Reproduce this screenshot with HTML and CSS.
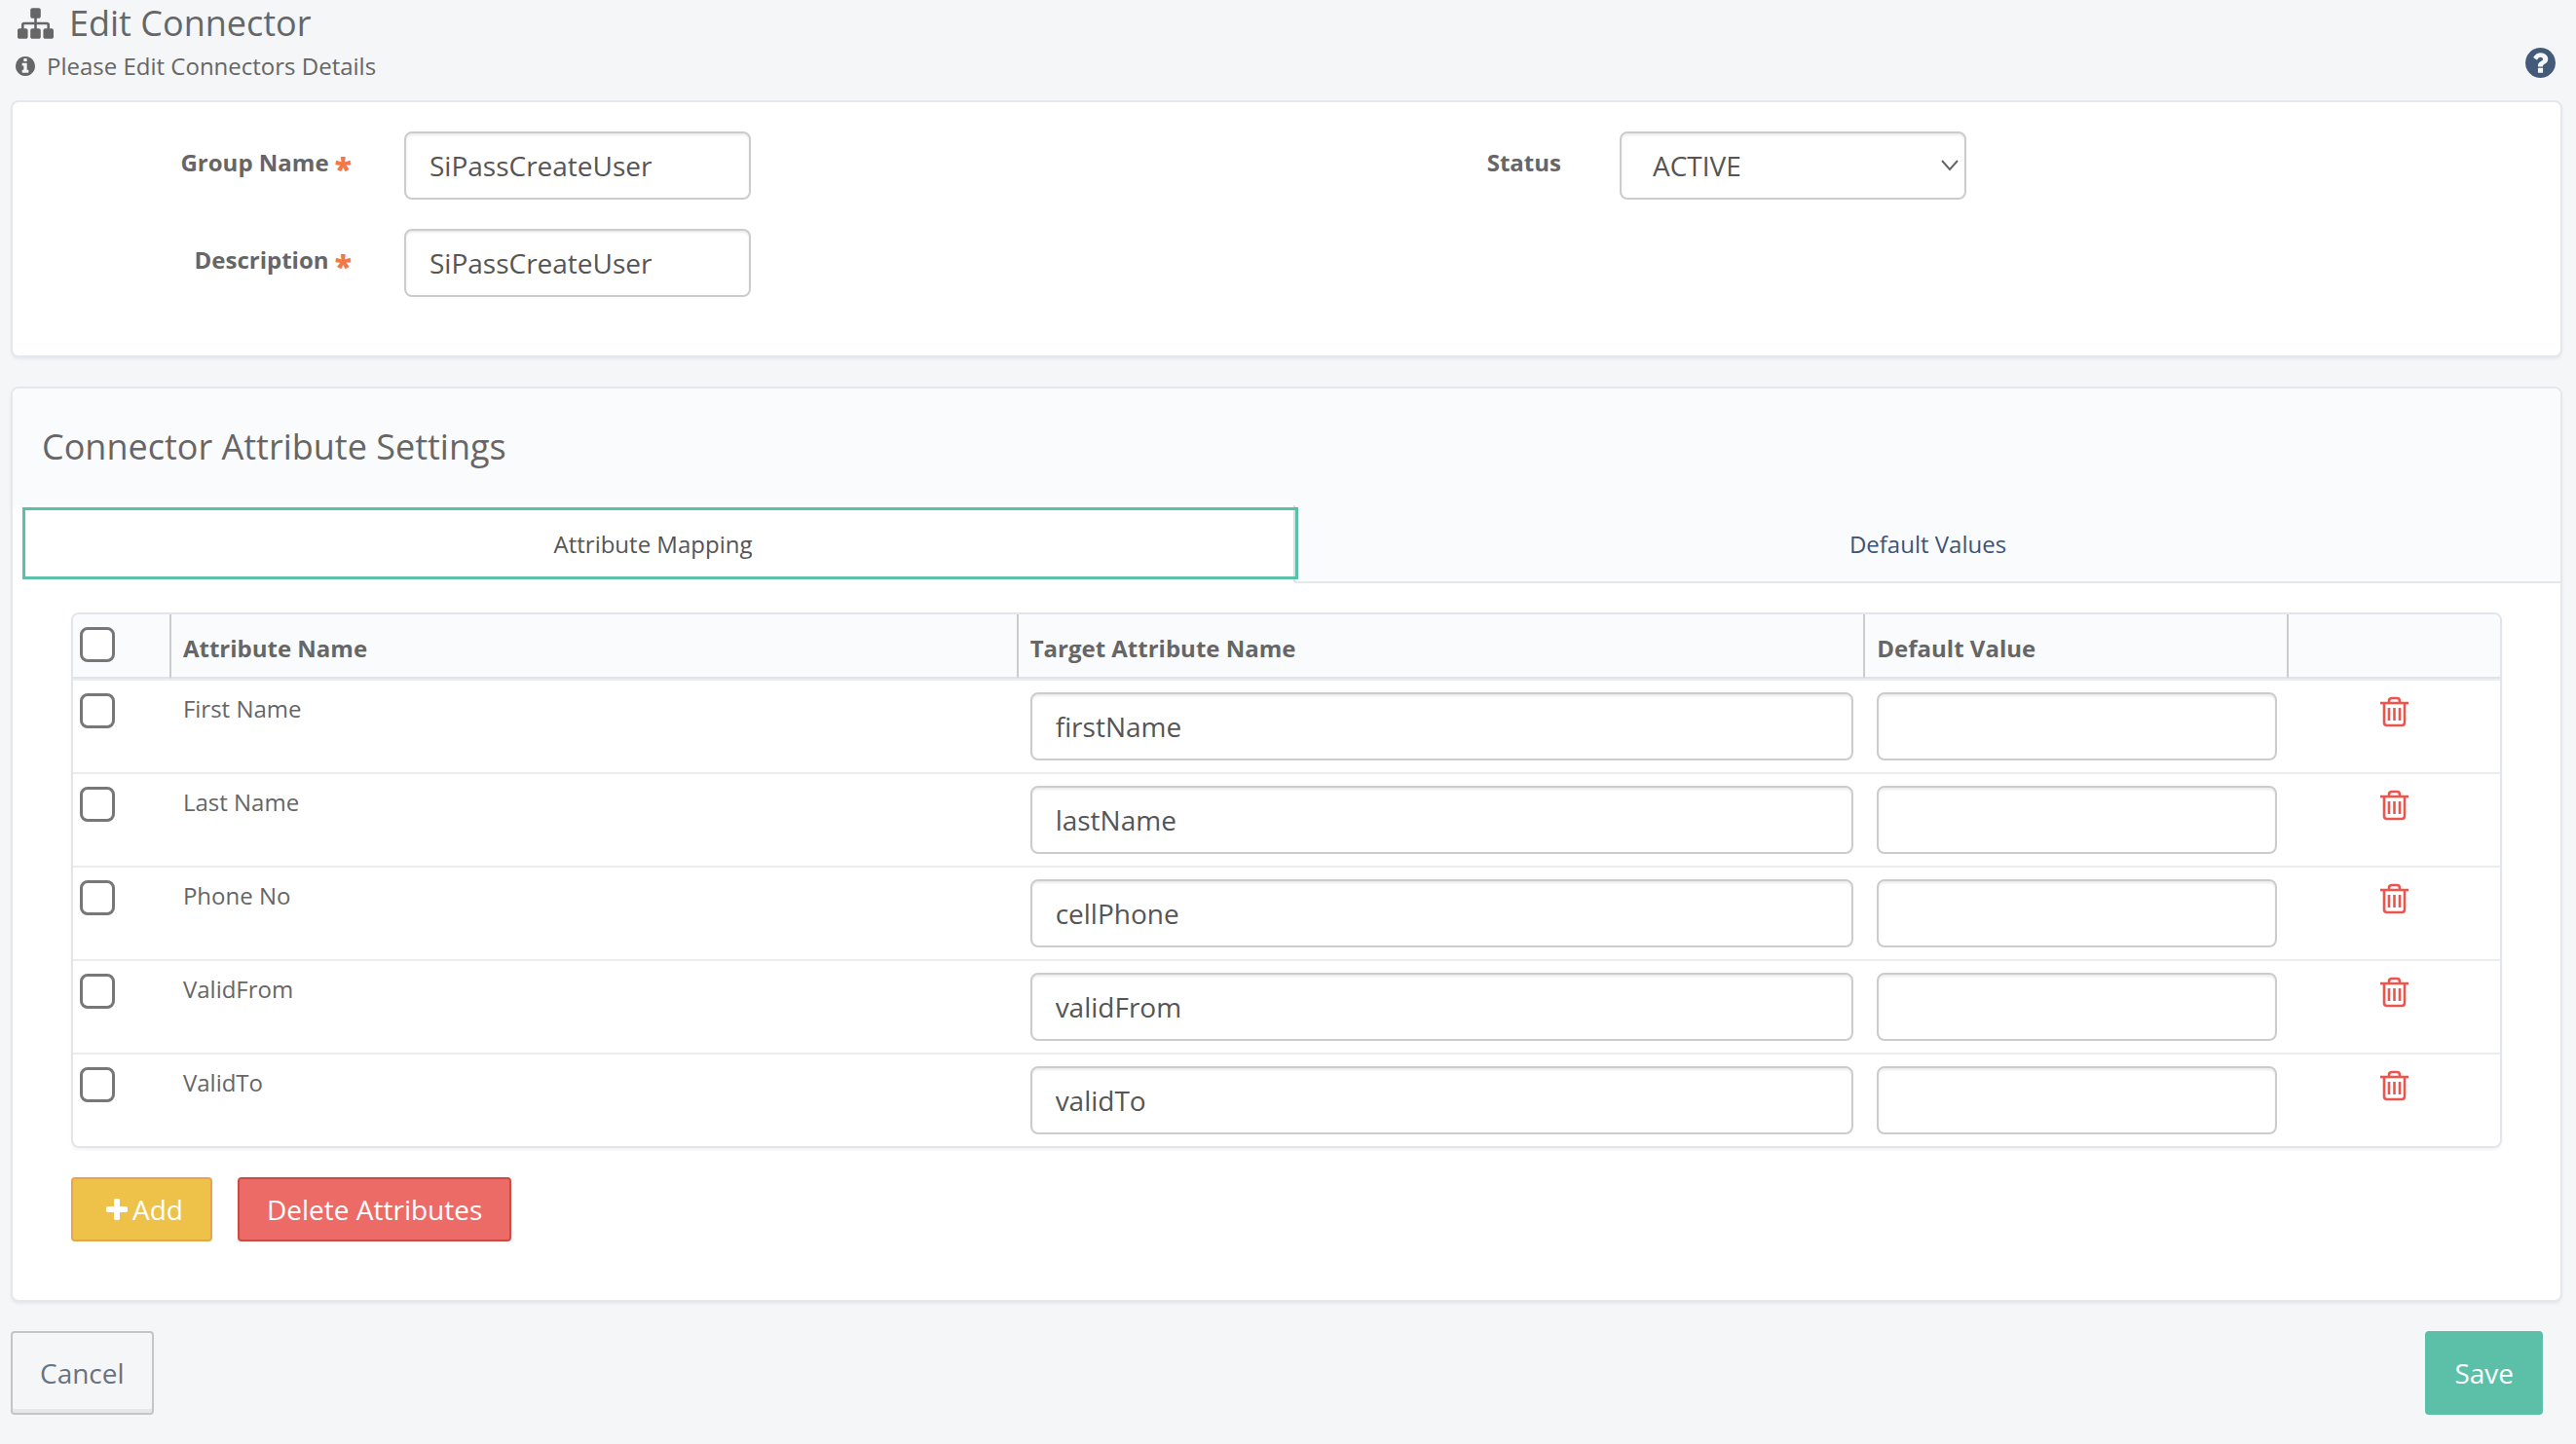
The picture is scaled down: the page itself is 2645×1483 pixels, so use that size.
FILE: index.html
```html
<!DOCTYPE html>
<html lang="en">
<head>
  <meta charset="UTF-8" />
  <meta name="viewport" content="width=device-width, initial-scale=1.0" />
  <title>Edit Connector</title>
  <link rel="stylesheet" href="styles.css">
</head>
<body>

  <!-- Shared icons -->
  <svg class="sprite" aria-hidden="true">
    <symbol id="icon-trash" viewBox="0 0 29 32">
      <path d="M0 7h29M9 7V5q0-3 3-3h5q3 0 3 3v2M4 7v20q0 3 3 3h15q3 0 3-3V7M9 12v13M14.500 12v13M20 12v13" fill="none" stroke="currentColor" stroke-width="2.600"/>
    </symbol>
  </svg>

  <!-- Page title -->
  <header class="page-header">
    <div>
      <h1>
        <svg class="icon-sitemap" viewBox="0 128 1792 1536" aria-hidden="true"><path fill="currentColor" d="M1792 1248v320q0 40-28 68t-68 28h-320q-40 0-68-28t-28-68v-320q0-40 28-68t68-28h96v-192h-512v192h96q40 0 68 28t28 68v320q0 40-28 68t-68 28h-320q-40 0-68-28t-28-68v-320q0-40 28-68t68-28h96v-192h-512v192h96q40 0 68 28t28 68v320q0 40-28 68t-68 28h-320q-40 0-68-28t-28-68v-320q0-40 28-68t68-28h96v-192q0-52 38-90t90-38h512v-192h-96q-40 0-68-28t-28-68v-320q0-40 28-68t68-28h320q40 0 68 28t28 68v320q0 40-28 68t-68 28h-96v192h512q52 0 90 38t38 90v192h96q40 0 68 28t28 68z"/></svg>
        Edit Connector
      </h1>
      <p class="subtitle">
        <svg class="icon-info" viewBox="128 128 1536 1536" aria-hidden="true"><path fill="currentColor" d="M1152 1376v-160q0-14-9-23t-23-9h-96v-512q0-14-9-23t-23-9h-320q-14 0-23 9t-9 23v160q0 14 9 23t23 9h96v320h-96q-14 0-23 9t-9 23v160q0 14 9 23t23 9h448q14 0 23-9t9-23zm-128-896v-160q0-14-9-23t-23-9h-192q-14 0-23 9t-9 23v160q0 14 9 23t23 9h192q14 0 23-9t9-23zm640 416q0 209-103 385.5t-279.5 279.5-385.5 103-385.5-103-279.5-279.5-103-385.5 103-385.5 279.5-279.5 385.5-103 385.5 103 279.5 279.5 103 385.5z"/></svg>
        Please Edit Connectors Details
      </p>
    </div>
    <a class="help" href="#" aria-label="Help">
      <svg viewBox="128 128 1536 1536" aria-hidden="true"><path fill="currentColor" d="M1024 1376v-192q0-14-9-23t-23-9h-192q-14 0-23 9t-9 23v192q0 14 9 23t23 9h192q14 0 23-9t9-23zm256-672q0-88-55.5-163t-138.5-116-170-41q-243 0-371 213-15 24 8 42l132 100q7 6 19 6 16 0 25-12 53-68 86-92 34-24 86-24 48 0 85.5 26t37.5 59q0 38-20 61t-68 45q-63 28-115.5 86.5t-52.5 125.5v36q0 14 9 23t23 9h192q14 0 23-9t9-23q0-19 21.5-49.5t54.5-49.5q32-18 49-28.5t46-35 44.5-48 28-60.5 12.5-81zm384 192q0 209-103 385.5t-279.5 279.5-385.5 103-385.5-103-279.5-279.5-103-385.5 103-385.5 279.5-279.5 385.5-103 385.5 103 279.5 279.5 103 385.5z"/></svg>
    </a>
  </header>

  <!-- Connector details -->
  <section class="panel details">
    <div class="field">
      <label for="groupName">Group Name <span class="required">*</span></label>
      <input class="form-control" type="text" id="groupName" value="SiPassCreateUser">
    </div>
    <div class="field optional">
      <label for="status">Status</label>
      <div class="select-wrap">
        <select class="form-control" id="status">
          <option>ACTIVE</option>
          <option>INACTIVE</option>
        </select>
        <svg class="chevron" viewBox="0 0 18 12" aria-hidden="true"><path d="M1 1l8 9 8-9" fill="none" stroke="currentColor" stroke-width="2"/></svg>
      </div>
    </div>
    <div class="field">
      <label for="description">Description <span class="required">*</span></label>
      <input class="form-control" type="text" id="description" value="SiPassCreateUser">
    </div>
  </section>

  <!-- Attribute settings -->
  <section class="panel">
    <div class="panel-heading">
      <h2>Connector Attribute Settings</h2>
      <ul class="tabs">
        <li class="active"><a href="#mapping">Attribute Mapping</a></li>
        <li><a href="#defaults">Default Values</a></li>
      </ul>
    </div>

    <div class="panel-body" id="mapping">
      <div class="table-box">
        <table>
          <colgroup>
            <col class="col-check">
            <col class="col-name">
            <col class="col-name">
            <col class="col-value">
            <col>
          </colgroup>
          <thead>
            <tr>
              <th class="check"><input type="checkbox" aria-label="Select all"></th>
              <th>Attribute Name</th>
              <th>Target Attribute Name</th>
              <th>Default Value</th>
              <th></th>
            </tr>
          </thead>
          <tbody>
            <tr>
              <td class="check"><input type="checkbox" aria-label="Select First Name"></td>
              <td>First Name</td>
              <td><input class="form-control" type="text" value="firstName" aria-label="Target for First Name"></td>
              <td><input class="form-control" type="text" aria-label="Default for First Name"></td>
              <td class="action"><button class="btn-trash" type="button" aria-label="Delete First Name"><svg><use href="#icon-trash"/></svg></button></td>
            </tr>
            <tr>
              <td class="check"><input type="checkbox" aria-label="Select Last Name"></td>
              <td>Last Name</td>
              <td><input class="form-control" type="text" value="lastName" aria-label="Target for Last Name"></td>
              <td><input class="form-control" type="text" aria-label="Default for Last Name"></td>
              <td class="action"><button class="btn-trash" type="button" aria-label="Delete Last Name"><svg><use href="#icon-trash"/></svg></button></td>
            </tr>
            <tr>
              <td class="check"><input type="checkbox" aria-label="Select Phone No"></td>
              <td>Phone No</td>
              <td><input class="form-control" type="text" value="cellPhone" aria-label="Target for Phone No"></td>
              <td><input class="form-control" type="text" aria-label="Default for Phone No"></td>
              <td class="action"><button class="btn-trash" type="button" aria-label="Delete Phone No"><svg><use href="#icon-trash"/></svg></button></td>
            </tr>
            <tr>
              <td class="check"><input type="checkbox" aria-label="Select ValidFrom"></td>
              <td>ValidFrom</td>
              <td><input class="form-control" type="text" value="validFrom" aria-label="Target for ValidFrom"></td>
              <td><input class="form-control" type="text" aria-label="Default for ValidFrom"></td>
              <td class="action"><button class="btn-trash" type="button" aria-label="Delete ValidFrom"><svg><use href="#icon-trash"/></svg></button></td>
            </tr>
            <tr>
              <td class="check"><input type="checkbox" aria-label="Select ValidTo"></td>
              <td>ValidTo</td>
              <td><input class="form-control" type="text" value="validTo" aria-label="Target for ValidTo"></td>
              <td><input class="form-control" type="text" aria-label="Default for ValidTo"></td>
              <td class="action"><button class="btn-trash" type="button" aria-label="Delete ValidTo"><svg><use href="#icon-trash"/></svg></button></td>
            </tr>
          </tbody>
        </table>
      </div>

      <div class="table-actions">
        <button class="btn btn-add" type="button">
          <svg viewBox="192 128 1408 1408" aria-hidden="true"><path fill="currentColor" d="M1600 736v192q0 40-28 68t-68 28h-416v416q0 40-28 68t-68 28h-192q-40 0-68-28t-28-68v-416h-416q-40 0-68-28t-28-68v-192q0-40 28-68t68-28h416v-416q0-40 28-68t68-28h192q40 0 68 28t28 68v416h416q40 0 68 28t28 68z"/></svg>
          Add
        </button>
        <button class="btn btn-delete" type="button">Delete Attributes</button>
      </div>
    </div>
  </section>

  <!-- Form buttons -->
  <footer class="page-actions">
    <button class="btn btn-cancel" type="button">Cancel</button>
    <button class="btn btn-save" type="submit">Save</button>
  </footer>

</body>
</html>
```

FILE: styles.css
```css
* {
  box-sizing: border-box;
}

body {
  margin: 0;
  padding: 0 14px 30px 11px;
  background-color: #f5f6f8;
  color: #666;
  font-family: "Open Sans", "Noto Sans", sans-serif;
  font-size: 24px;
  line-height: 34px;
}

h1,
h2 {
  margin: 0;
  font-size: 36px;
  font-weight: normal;
  line-height: 48px;
}

.sprite {
  display: none;
}

/* Page title */
.page-header {
  display: flex;
  justify-content: space-between;
  align-items: flex-end;
  margin-bottom: 18px;
  padding: 0 7px 0 5px;
}

.page-header h1,
.subtitle {
  display: flex;
  align-items: center;
}

.page-header h1 {
  gap: 16px;
  padding-left: 2px;
}

.subtitle {
  gap: 12px;
  margin: 3px 0 0;
}

.icon-sitemap {
  width: 37px;
  height: 32px;
}

.icon-info {
  width: 20px;
  height: 20px;
}

.help {
  color: #435a7a;
  margin-bottom: 5px;
}

.help svg {
  display: block;
  width: 31px;
  height: 31px;
}

/* Panels */
.panel {
  margin-bottom: 30px;
  background-color: #fff;
  border: 2px solid #e4e7ec;
  border-radius: 8px;
  box-shadow: 0 2px 3px rgba(0,0,0,0.06);
}

.details {
  display: grid;
  grid-template-columns: 1fr 1fr;
  row-gap: 30px;
  padding: 30px 120px 60px 0;
}

.field {
  display: flex;
  align-items: flex-start;
}

.field label {
  width: 348px;
  margin-right: 54px;
  padding-top: 15px;
  font-weight: bold;
  text-align: right;
}

.field.optional label {
  padding-right: 6px;
}

.field .form-control {
  width: 356px;
}

.required {
  color: #f4774a;
  font-size: 32px;
  font-weight: 800;
  line-height: 0;
  vertical-align: -9px;
}

.form-control {
  display: block;
  width: 100%;
  height: 70px;
  padding: 0 24px;
  background-color: #fff;
  border: 2px solid #ccc;
  border-radius: 8px;
  box-shadow: inset 0 2px 2px rgba(0,0,0,0.075);
  color: #555;
  font-family: inherit;
  font-size: 28px;
}

select.form-control {
  padding: 0 32px;
  appearance: none;
}

.select-wrap {
  position: relative;
}

.chevron {
  position: absolute;
  top: 29px;
  right: 8px;
  width: 18px;
  height: 12px;
  pointer-events: none;
}

/* Tabs */
.panel-heading {
  padding-top: 36px;
  background-color: #fafbfd;
  border-radius: 6px 6px 0 0;
}

.panel-heading h2 {
  margin: 0 30px 36px;
}

.tabs {
  display: grid;
  grid-template-columns: 1317fr 1299fr;
  margin: 0;
  padding: 0;
  list-style-type: none;
}

.tabs li {
  border-bottom: 2px solid #e4e7ec;
}

.tabs li.active {
  background-color: #fff;
  border-right: 2px solid #ddd;
  border-bottom-color: #fff;
  border-radius: 8px 0 0 0;
}

.tabs a {
  display: block;
  margin: 5px 0;
  padding-top: 2px;
  color: #3d5475;
  line-height: 66px;
  text-align: center;
  text-decoration: none;
}

.tabs li.active a {
  margin-left: 13px;
  margin-right: -2px;
  padding-right: 15px;
  color: #555;
  outline: 3px solid #5cbfa7;
}

/* Attribute table */
.panel-body {
  padding: 30px 60px 60px;
}

.table-box {
  overflow: hidden;
  border: 2px solid #e2e6ea;
  border-radius: 8px;
  box-shadow: 0 2px 3px rgba(0,0,0,0.05);
}

table {
  width: 100%;
  table-layout: fixed;
  border-collapse: separate;
  border-spacing: 0;
}

.col-check {
  width: 4.05%;
}

.col-name {
  width: 34.9%;
}

.col-value {
  width: 17.45%;
}

th,
td {
  padding: 12px;
  text-align: left;
  vertical-align: top;
}

th {
  padding-top: 18px;
  background-color: #fafbfd;
  border-right: 2px solid #ccc;
  border-bottom: 2px solid #e0e4e8;
}

th:last-child {
  border-right: none;
}

td {
  border-top: 2px solid #ebedef;
}

.check {
  padding: 13px 7px 0;
}

.check input {
  display: block;
  width: 36px;
  height: 36px;
  margin: 0;
  background-color: #fff;
  border: 3px solid #777;
  border-radius: 8px;
  appearance: none;
}

.check input:checked {
  background-color: #5cbfa7;
}

.action {
  padding-top: 16px;
  text-align: center;
}

.btn-trash {
  padding: 0;
  background: none;
  border: none;
  color: #ee534c;
  cursor: pointer;
}

.btn-trash svg {
  display: block;
  width: 29px;
  height: 32px;
}

/* Buttons */
.btn {
  height: 86px;
  padding: 0 28px;
  border: 2px solid;
  border-radius: 4px;
  font-family: inherit;
  font-size: 28px;
  cursor: pointer;
}

.table-actions {
  display: flex;
  gap: 26px;
  margin-top: 30px;
}

.table-actions .btn {
  height: 66px;
  color: #fff;
}

.btn-add {
  display: flex;
  align-items: center;
  gap: 5px;
  padding-left: 34px;
  background-color: #eec248;
  border-color: #e6a54a;
}

.btn-add svg {
  width: 22px;
  height: 22px;
}

.table-actions .btn-delete {
  background-color: #ed6b67;
  border-color: #cb4c44;
}

.page-actions {
  display: flex;
  justify-content: space-between;
  padding-right: 20px;
}

.btn-cancel {
  background-color: #f5f6f8;
  border-color: #c3c5c8;
  box-shadow: inset 0 -4px 0 #e8e8e8;
  color: #677384;
}

.btn-save {
  background-color: #5cbfa7;
  border-color: #5cbfa7;
  color: #fff;
}
```
